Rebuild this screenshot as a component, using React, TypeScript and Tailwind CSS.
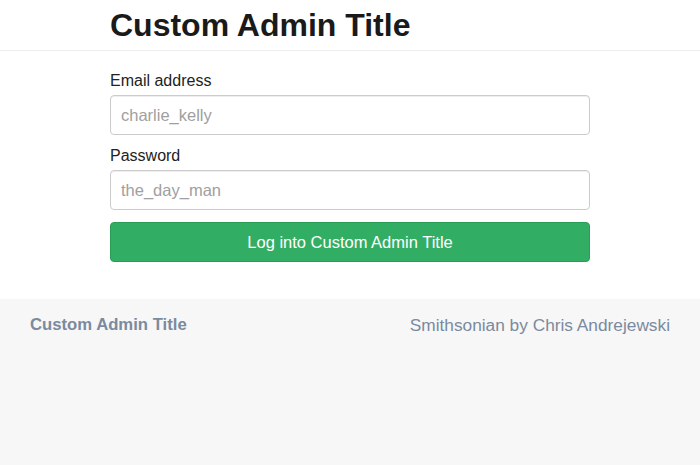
export default function App() {
  return (
    <div
      className="min-h-[465px] flex flex-col bg-white"
      style={{ fontFamily: '"Liberation Sans", Arial, sans-serif' }}
    >
      <header className="border-b border-[#eeeeee] h-[51px]">
        <h1 className="ml-[110px] pt-[6px] text-[32px] leading-[38px] font-bold text-[#1a1a1a]">
          Custom Admin Title
        </h1>
      </header>

      <form className="w-[480px] ml-[110px] pt-[20px] pb-[37px]" onSubmit={e => e.preventDefault()}>
        <label className="block text-[16px] leading-[20px] text-[#222] mb-[4px]">Email address</label>
        <input
          type="text"
          placeholder="charlie_kelly"
          className="block w-full h-[40px] px-[10px] rounded-[4px] border border-[#cccccc] text-[16.5px] placeholder:text-[#a0a0a0] shadow-[inset_0_1px_1px_rgba(0,0,0,0.075)]"
        />
        <label className="block mt-[11px] text-[16px] leading-[20px] text-[#222] mb-[4px]">Password</label>
        <input
          type="password"
          placeholder="the_day_man"
          className="block w-full h-[40px] px-[10px] rounded-[4px] border border-[#cccccc] text-[16.5px] placeholder:text-[#a0a0a0] shadow-[inset_0_1px_1px_rgba(0,0,0,0.075)]"
        />
        <button
          type="submit"
          className="mt-[12px] w-full h-[40px] rounded-[4px] bg-[#32ae64] border border-[#2a9e57] text-white text-[16.5px]"
        >
          Log into Custom Admin Title
        </button>
      </form>

      <footer className="flex-1 bg-[#f7f7f7] px-[30px] pt-[16px]">
        <div className="flex justify-between items-center leading-[20px] text-[#7b8a9e]">
          <span className="font-bold text-[16.7px]">Custom Admin Title</span>
          <span className="text-[17.3px]">Smithsonian by Chris Andrejewski</span>
        </div>
      </footer>
    </div>
  )
}
